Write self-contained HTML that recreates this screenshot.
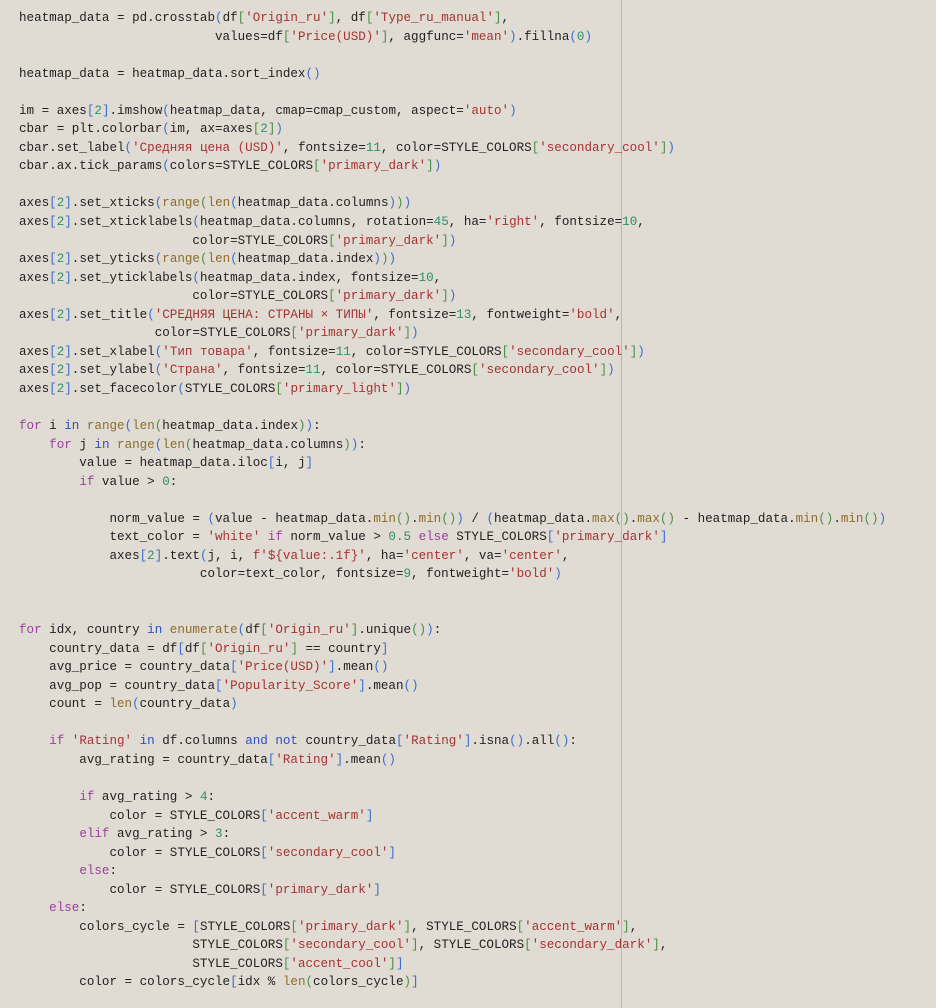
<!DOCTYPE html>
<html><head><meta charset="utf-8"><style>
html,body{margin:0;padding:0;background:#e0dbd3;width:936px;height:1008px;overflow:hidden}
pre{position:absolute;left:19px;top:9px;margin:0;font-family:"Liberation Mono","DejaVu Sans Mono",monospace;font-size:12.57px;line-height:18.54px;color:#222;}
.k{color:#9b3f9e}.i{color:#2f4fc8}.b{color:#8c6d2a}.s{color:#a83232}.n{color:#2f8f6a}.p{color:#3a6fd0}.g{color:#4a8f4a}
.vl{position:absolute;left:621px;top:0;width:1px;height:1008px;background:#bdb6ad}
</style></head><body>
<div class="vl"></div>
<pre>heatmap_data = pd.crosstab<span class="p">(</span>df<span class="g">[</span><span class="s">'Origin_ru'</span><span class="g">]</span>, df<span class="g">[</span><span class="s">'Type_ru_manual'</span><span class="g">]</span>,
                          values=df<span class="g">[</span><span class="s">'Price(USD)'</span><span class="g">]</span>, aggfunc=<span class="s">'mean'</span><span class="p">)</span>.fillna<span class="p">(</span><span class="n">0</span><span class="p">)</span>

heatmap_data = heatmap_data.sort_index<span class="p">()</span>

im = axes<span class="p">[</span><span class="n">2</span><span class="p">]</span>.imshow<span class="p">(</span>heatmap_data, cmap=cmap_custom, aspect=<span class="s">'auto'</span><span class="p">)</span>
cbar = plt.colorbar<span class="p">(</span>im, ax=axes<span class="g">[</span><span class="n">2</span><span class="g">]</span><span class="p">)</span>
cbar.set_label<span class="p">(</span><span class="s">'Средняя цена (USD)'</span>, fontsize=<span class="n">11</span>, color=STYLE_COLORS<span class="g">[</span><span class="s">'secondary_cool'</span><span class="g">]</span><span class="p">)</span>
cbar.ax.tick_params<span class="p">(</span>colors=STYLE_COLORS<span class="g">[</span><span class="s">'primary_dark'</span><span class="g">]</span><span class="p">)</span>

axes<span class="p">[</span><span class="n">2</span><span class="p">]</span>.set_xticks<span class="p">(</span><span class="b">range</span><span class="g">(</span><span class="b">len</span><span class="p">(</span>heatmap_data.columns<span class="p">)</span><span class="g">)</span><span class="p">)</span>
axes<span class="p">[</span><span class="n">2</span><span class="p">]</span>.set_xticklabels<span class="p">(</span>heatmap_data.columns, rotation=<span class="n">45</span>, ha=<span class="s">'right'</span>, fontsize=<span class="n">10</span>,
                       color=STYLE_COLORS<span class="g">[</span><span class="s">'primary_dark'</span><span class="g">]</span><span class="p">)</span>
axes<span class="p">[</span><span class="n">2</span><span class="p">]</span>.set_yticks<span class="p">(</span><span class="b">range</span><span class="g">(</span><span class="b">len</span><span class="p">(</span>heatmap_data.index<span class="p">)</span><span class="g">)</span><span class="p">)</span>
axes<span class="p">[</span><span class="n">2</span><span class="p">]</span>.set_yticklabels<span class="p">(</span>heatmap_data.index, fontsize=<span class="n">10</span>,
                       color=STYLE_COLORS<span class="g">[</span><span class="s">'primary_dark'</span><span class="g">]</span><span class="p">)</span>
axes<span class="p">[</span><span class="n">2</span><span class="p">]</span>.set_title<span class="p">(</span><span class="s">'СРЕДНЯЯ ЦЕНА: СТРАНЫ × ТИПЫ'</span>, fontsize=<span class="n">13</span>, fontweight=<span class="s">'bold'</span>,
                  color=STYLE_COLORS<span class="g">[</span><span class="s">'primary_dark'</span><span class="g">]</span><span class="p">)</span>
axes<span class="p">[</span><span class="n">2</span><span class="p">]</span>.set_xlabel<span class="p">(</span><span class="s">'Тип товара'</span>, fontsize=<span class="n">11</span>, color=STYLE_COLORS<span class="g">[</span><span class="s">'secondary_cool'</span><span class="g">]</span><span class="p">)</span>
axes<span class="p">[</span><span class="n">2</span><span class="p">]</span>.set_ylabel<span class="p">(</span><span class="s">'Страна'</span>, fontsize=<span class="n">11</span>, color=STYLE_COLORS<span class="g">[</span><span class="s">'secondary_cool'</span><span class="g">]</span><span class="p">)</span>
axes<span class="p">[</span><span class="n">2</span><span class="p">]</span>.set_facecolor<span class="p">(</span>STYLE_COLORS<span class="g">[</span><span class="s">'primary_light'</span><span class="g">]</span><span class="p">)</span>

<span class="k">for</span> i <span class="i">in</span> <span class="b">range</span><span class="p">(</span><span class="b">len</span><span class="g">(</span>heatmap_data.index<span class="g">)</span><span class="p">)</span>:
    <span class="k">for</span> j <span class="i">in</span> <span class="b">range</span><span class="p">(</span><span class="b">len</span><span class="g">(</span>heatmap_data.columns<span class="g">)</span><span class="p">)</span>:
        value = heatmap_data.iloc<span class="p">[</span>i, j<span class="p">]</span>
        <span class="k">if</span> value &gt; <span class="n">0</span>:

            norm_value = <span class="p">(</span>value - heatmap_data.<span class="b">min</span><span class="g">()</span>.<span class="b">min</span><span class="g">()</span><span class="p">)</span> / <span class="p">(</span>heatmap_data.<span class="b">max</span><span class="g">()</span>.<span class="b">max</span><span class="g">()</span> - heatmap_data.<span class="b">min</span><span class="g">()</span>.<span class="b">min</span><span class="g">()</span><span class="p">)</span>
            text_color = <span class="s">'white'</span> <span class="k">if</span> norm_value &gt; <span class="n">0.5</span> <span class="k">else</span> STYLE_COLORS<span class="p">[</span><span class="s">'primary_dark'</span><span class="p">]</span>
            axes<span class="p">[</span><span class="n">2</span><span class="p">]</span>.text<span class="p">(</span>j, i, <span class="s">f'${value:.1f}'</span>, ha=<span class="s">'center'</span>, va=<span class="s">'center'</span>,
                        color=text_color, fontsize=<span class="n">9</span>, fontweight=<span class="s">'bold'</span><span class="p">)</span>


<span class="k">for</span> idx, country <span class="i">in</span> <span class="b">enumerate</span><span class="p">(</span>df<span class="g">[</span><span class="s">'Origin_ru'</span><span class="g">]</span>.unique<span class="g">()</span><span class="p">)</span>:
    country_data = df<span class="p">[</span>df<span class="g">[</span><span class="s">'Origin_ru'</span><span class="g">]</span> == country<span class="p">]</span>
    avg_price = country_data<span class="p">[</span><span class="s">'Price(USD)'</span><span class="p">]</span>.mean<span class="p">()</span>
    avg_pop = country_data<span class="p">[</span><span class="s">'Popularity_Score'</span><span class="p">]</span>.mean<span class="p">()</span>
    count = <span class="b">len</span><span class="p">(</span>country_data<span class="p">)</span>

    <span class="k">if</span> <span class="s">'Rating'</span> <span class="i">in</span> df.columns <span class="i">and</span> <span class="i">not</span> country_data<span class="p">[</span><span class="s">'Rating'</span><span class="p">]</span>.isna<span class="p">()</span>.all<span class="p">()</span>:
        avg_rating = country_data<span class="p">[</span><span class="s">'Rating'</span><span class="p">]</span>.mean<span class="p">()</span>

        <span class="k">if</span> avg_rating &gt; <span class="n">4</span>:
            color = STYLE_COLORS<span class="p">[</span><span class="s">'accent_warm'</span><span class="p">]</span>
        <span class="k">elif</span> avg_rating &gt; <span class="n">3</span>:
            color = STYLE_COLORS<span class="p">[</span><span class="s">'secondary_cool'</span><span class="p">]</span>
        <span class="k">else</span>:
            color = STYLE_COLORS<span class="p">[</span><span class="s">'primary_dark'</span><span class="p">]</span>
    <span class="k">else</span>:
        colors_cycle = <span class="p">[</span>STYLE_COLORS<span class="g">[</span><span class="s">'primary_dark'</span><span class="g">]</span>, STYLE_COLORS<span class="g">[</span><span class="s">'accent_warm'</span><span class="g">]</span>,
                       STYLE_COLORS<span class="g">[</span><span class="s">'secondary_cool'</span><span class="g">]</span>, STYLE_COLORS<span class="g">[</span><span class="s">'secondary_dark'</span><span class="g">]</span>,
                       STYLE_COLORS<span class="g">[</span><span class="s">'accent_cool'</span><span class="g">]</span><span class="p">]</span>
        color = colors_cycle<span class="p">[</span>idx % <span class="b">len</span><span class="g">(</span>colors_cycle<span class="g">)</span><span class="p">]</span></pre>
</body></html>
